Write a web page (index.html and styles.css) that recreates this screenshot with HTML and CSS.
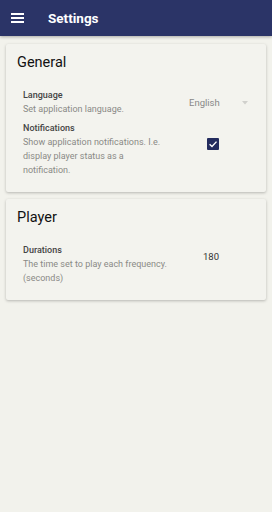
FILE: index.html
```html
<!DOCTYPE html>
<html lang="en">
<head>
    <meta charset="UTF-8">
    <meta name="viewport" content="width=device-width, initial-scale=1.0">
    <title>Settings</title>
    <link rel="stylesheet" href="styles.css">
</head>
<body>
    <div class="toolbar">
        <span class="menu-btn">
            <svg width="13" height="10" viewBox="0 0 13 10">
                <rect x="0" y="0" width="13" height="2" fill="#fff"/>
                <rect x="0" y="4" width="13" height="2" fill="#fff"/>
                <rect x="0" y="8" width="13" height="2" fill="#fff"/>
            </svg>
        </span>
        <span class="title">Settings</span>
    </div>

    <div class="content">
        <div class="card">
            <h2>General</h2>
            <div class="pref">
                <div class="pref-text">
                    <div class="pref-title">Language</div>
                    <div class="pref-desc">Set application language.</div>
                </div>
                <div class="pref-value select">
                    <span>English</span>
                    <svg width="6" height="4" viewBox="0 0 6 4"><polygon points="0,0 6,0 3,3.5" fill="#d0d0cc"/></svg>
                </div>
            </div>
            <div class="pref">
                <div class="pref-text">
                    <div class="pref-title">Notifications</div>
                    <div class="pref-desc">Show application notifications. I.e. display player status as a notification.</div>
                </div>
                <div class="pref-value top">
                    <span class="checkbox">
                        <svg width="12" height="12" viewBox="0 0 12 12">
                            <rect width="12" height="12" rx="1" fill="#232c5e"/>
                            <polyline points="2.6,6.2 5,8.5 9.5,3.6" fill="none" stroke="#fff" stroke-width="1.4"/>
                        </svg>
                    </span>
                </div>
            </div>
        </div>

        <div class="card">
            <h2>Player</h2>
            <div class="pref">
                <div class="pref-text">
                    <div class="pref-title">Durations</div>
                    <div class="pref-desc">The time set to play each frequency. (seconds)</div>
                </div>
                <div class="pref-value top number">180</div>
            </div>
        </div>
    </div>
</body>
</html>
```

FILE: styles.css
```css
body {
    margin: 0;
    font-family: Roboto, "Noto Sans", sans-serif;
    background-color: #f2f2ec;
    height: 512px;
    overflow: hidden;
}
.toolbar {
    height: 36px;
    background-color: #2b3467;
    display: flex;
    align-items: center;
    color: white;
    box-shadow: 0 1px 3px rgba(0,0,0,0.3);
}
.menu-btn {
    width: 48px;
    padding-left: 11px;
    box-sizing: border-box;
    display: flex;
}
.title {
    font-size: 13.5px;
    font-weight: bold;
}
.content {
    padding: 8px 6px;
    display: flex;
    flex-direction: column;
    gap: 7px;
}
.card {
    background-color: #f3f3ee;
    border-radius: 2px;
    box-shadow: 0 1px 3px rgba(0,0,0,0.25);
    padding: 10px 11px 15px 11px;
}
.card h2 {
    font-size: 14.5px;
    font-weight: 400;
    line-height: 18px;
    color: #111;
    margin: 0 0 17px 0;
}
.pref {
    display: flex;
    align-items: center;
    padding-left: 6px;
    margin-bottom: 6px;
}
.pref:last-child {
    margin-bottom: 0;
}
.pref-text {
    width: 164px;
}
.pref-title {
    font-size: 9px;
    font-weight: 500;
    color: #444;
    line-height: 13px;
}
.pref-desc {
    font-size: 9px;
    color: #8a8a86;
    line-height: 14px;
    max-width: 150px;
}
.pref-value {
    flex: 1;
    font-size: 9.5px;
    color: #333;
    display: flex;
    align-items: center;
}
.top {
    align-self: flex-start;
}
.select {
    padding-left: 2px;
    color: #888;
    gap: 22px;
}
.checkbox {
    padding-left: 20px;
    padding-top: 16px;
    display: flex;
}
.number {
    padding-left: 16px;
    padding-top: 7px;
}
```
